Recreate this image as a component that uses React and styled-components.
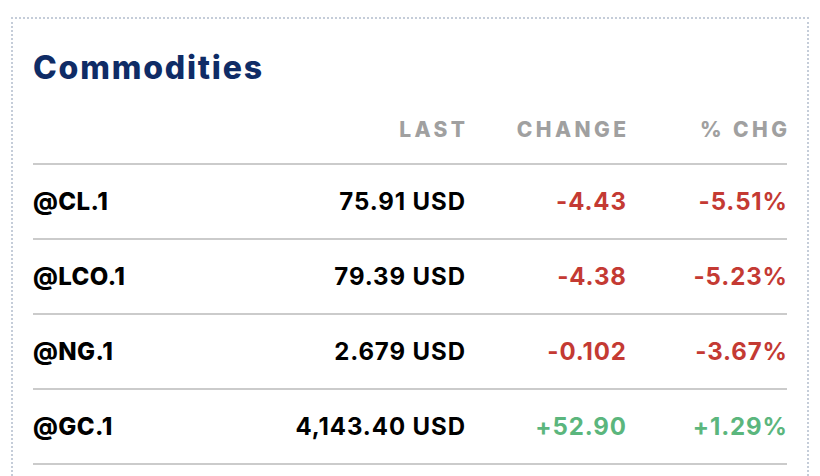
import styled, { createGlobalStyle } from "styled-components"

const rows = [
  { symbol: "@CL.1", last: "75.91 USD", change: "-4.43", pct: "-5.51%" },
  { symbol: "@LCO.1", last: "79.39 USD", change: "-4.38", pct: "-5.23%" },
  { symbol: "@NG.1", last: "2.679 USD", change: "-0.102", pct: "-3.67%" },
  { symbol: "@GC.1", last: "4,143.40 USD", change: "+52.90", pct: "+1.29%" },
]

const GlobalStyle = createGlobalStyle`
  html, body {
    margin: 0;
    padding: 0;
    background: #fff;
    overflow: hidden;
  }
  body {
    font-family: "Inter", "Liberation Sans", sans-serif;
  }
`

const App = () => {
  return (
    <>
      <GlobalStyle />
      <Card>
        <Title>Commodities</Title>
        <Table>
          <HeadRow>
            <HeadCell />
            <HeadCell>LAST</HeadCell>
            <HeadCell>CHANGE</HeadCell>
            <HeadCell>% CHG</HeadCell>
          </HeadRow>
          {rows.map(r => {
            const up = r.change.startsWith("+")
            return (
              <Row key={r.symbol}>
                <Symbol>{r.symbol}</Symbol>
                <Value>{r.last}</Value>
                <Value $up={up} $colored>
                  {r.change}
                </Value>
                <Value $up={up} $colored>
                  {r.pct}
                </Value>
              </Row>
            )
          })}
        </Table>
      </Card>
    </>
  )
}

export default App

const Card = styled.div`
  margin: 17px 11px 0 11px;
  height: 459px;
  border: 2px dotted #c5cdd9;
  border-bottom: none;
  padding: 0 20px;
  box-sizing: border-box;
`
const Title = styled.h2`
  margin: 0;
  padding-top: 33px;
  font-size: 32px;
  line-height: 31px;
  font-weight: 800;
  color: #0f2c66;
  letter-spacing: 1.8px;
`
const Table = styled.div`
  display: flex;
  flex-direction: column;
  margin-top: 24px;
`
const HeadRow = styled.div`
  display: grid;
  grid-template-columns: 1fr 200px 161px 161px;
  height: 58px;
  align-items: center;
  border-bottom: 2px solid #cbcbcb;
  padding-bottom: 12px;
  box-sizing: border-box;
`
const HeadCell = styled.div`
  text-align: right;
  font-size: 21px;
  font-weight: 800;
  letter-spacing: 3.4px;
  margin-right: -3.4px;
  color: #a0a0a0;
`
const Row = styled.div`
  display: grid;
  grid-template-columns: 1fr 200px 161px 161px;
  height: 75px;
  align-items: center;
  border-bottom: 2px solid #cbcbcb;
  box-sizing: border-box;
`
const Symbol = styled.div`
  font-size: 24px;
  font-weight: 800;
  color: #000;
  letter-spacing: 0.4px;
`
const Value = styled.div`
  text-align: right;
  font-size: 24px;
  font-weight: 700;
  letter-spacing: 0.9px;
  margin-right: -0.9px;
  color: ${({ $colored, $up }) => ($colored ? ($up ? "#5bb67d" : "#c43a33") : "#000")};
`
